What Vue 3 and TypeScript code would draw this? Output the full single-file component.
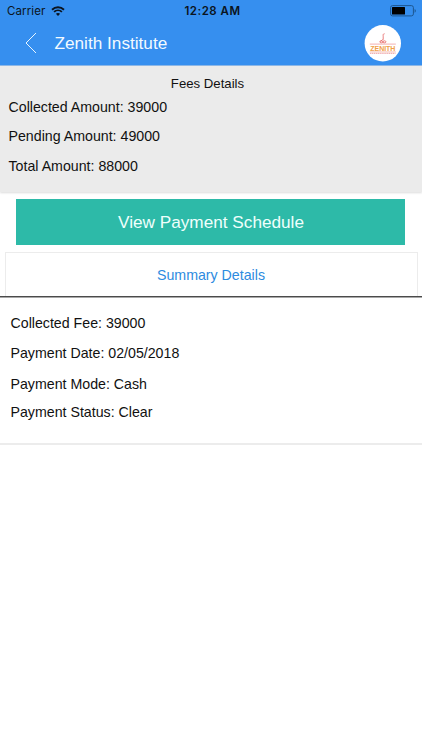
<template>
  <div class="screen">
    <header class="header">
      <div class="status-bar">
        <div class="carrier">
          <span>Carrier</span>
          <svg class="wifi" viewBox="0 0 14 10">
            <path d="M1 3.7C4.4.5 9.6.5 13 3.7" />
            <path d="M3.1 5.9c2.2-2 5.6-2 7.8 0" />
            <path class="wifi-dot" d="M7 9.9 4.9 7.7c1.1-1.1 3.1-1.1 4.2 0z" />
          </svg>
        </div>
        <span class="time">12:28 AM</span>
        <svg class="battery" viewBox="0 0 27 12">
          <rect class="battery-case" x=".6" y=".6" width="22.8" height="10.3" rx="2" />
          <rect x="2" y="2" width="13" height="7.5" rx=".5" />
          <path class="battery-tip" d="M24.6 4c1.6.5 1.6 3.2 0 3.7z" />
        </svg>
      </div>
      <div class="nav-bar">
        <button class="back" aria-label="Back">
          <svg viewBox="0 0 12 22">
            <path d="M11 1 1 11l10 10" />
          </svg>
        </button>
        <h1 class="title">Zenith Institute</h1>
        <svg class="logo" viewBox="0 0 37 37">
          <circle cx="18.8" cy="18.3" r="18.2" fill="#fff" />
          <g fill="none" stroke="#e4605f" stroke-width=".8">
            <path d="M20.6 8.8c-1.6-.2-1.5 1.1-1.4 2.4v3.4" />
            <path d="M19 14.2c-.5 1-1.4 1.4-2.6 2" />
            <ellipse cx="17.4" cy="16.8" rx="1.6" ry="1" />
            <ellipse cx="20.4" cy="16.8" rx="1.5" ry="1" />
            <path d="M5.8 19.1h26" stroke-width=".5" />
          </g>
          <text class="logo-name" x="18.8" y="25.7" textLength="25" lengthAdjust="spacing">ZENITH</text>
          <path d="M5.8 26.9h26" stroke="#ed8a77" stroke-width=".5" />
          <path d="M6 28.3h25.5" stroke="#ec9497" stroke-width=".9" stroke-dasharray="1.4 .5" />
        </svg>
      </div>
    </header>

    <section class="fees">
      <h2 class="fees-title">Fees Details</h2>
      <p v-for="fee in fees" :key="fee.label" class="fees-row">{{ fee.label }}: {{ fee.value }}</p>
    </section>

    <button class="schedule-btn">View Payment Schedule</button>

    <div class="tab">Summary Details</div>

    <section class="summary">
      <p v-for="item in summary" :key="item.label" class="summary-row">
        {{ item.label }}: {{ item.value }}
      </p>
    </section>
  </div>
</template>

<script setup lang="ts">
import { ref } from 'vue'

interface DetailRow {
  label: string
  value: string | number
}

const fees = ref<DetailRow[]>([
  { label: 'Collected Amount', value: 39000 },
  { label: 'Pending Amount', value: 49000 },
  { label: 'Total Amount', value: 88000 },
])

const summary = ref<DetailRow[]>([
  { label: 'Collected Fee', value: 39000 },
  { label: 'Payment Date', value: '02/05/2018' },
  { label: 'Payment Mode', value: 'Cash' },
  { label: 'Payment Status', value: 'Clear' },
])
</script>

<style>
body {
  margin: 0;
  background: #fff;
}
</style>

<style scoped>
.screen {
  min-height: 750px;
  background: #fff;
  color: #111;
  font-family: 'Liberation Sans', Arial, sans-serif;
  font-size: 14.2px;
}
h1,
h2,
p {
  margin: 0;
  font-weight: 400;
}
button {
  padding: 0;
  border: none;
  font-family: inherit;
}

.header {
  height: 65px;
  background: #368fef;
  border-bottom: 1px solid #8fb9e8;
}
.status-bar {
  display: grid;
  grid-template-columns: 1fr auto 1fr;
  align-items: center;
  height: 22px;
  padding: 0 5px 0 7px;
  color: #0b1420;
  font-family: Inter, sans-serif;
  font-size: 11.5px;
}
.carrier {
  display: flex;
  align-items: center;
  gap: 6px;
  letter-spacing: 0.1px;
}
.wifi {
  width: 14px;
  height: 10px;
  fill: none;
  stroke: #0b1420;
  stroke-width: 1.9;

  .wifi-dot {
    fill: #0b1420;
    stroke: none;
  }
}
.time {
  padding-left: 1px;
  font-weight: 600;
  letter-spacing: 0.5px;
}
.battery {
  justify-self: end;
  width: 27px;
  height: 12px;

  .battery-case {
    fill: none;
    stroke: #1d568f;
    stroke-width: 1;
  }

  .battery-tip {
    fill: #1d568f;
  }
}

.nav-bar {
  display: flex;
  align-items: center;
  height: 42px;
  padding: 0 21px 0 25px;
}
.back {
  display: flex;
  width: 29.5px;
  background: none;

  svg {
    width: 12px;
    height: 22px;
    fill: none;
    stroke: #e8f6ff;
    stroke-width: 1;
  }
}
.title {
  flex: 1;
  color: #f2faff;
  font-size: 17.2px;
  line-height: 42px;
}
.logo {
  width: 37px;
  height: 37px;
}
.logo-name {
  fill: #f0a04a;
  font-family: 'Liberation Sans', Arial, sans-serif;
  font-size: 7px;
  font-weight: 700;
  text-anchor: middle;
}

.fees {
  box-sizing: border-box;
  height: 126px;
  padding-top: 8px;
  background: #ebebeb;
  box-shadow: 0 1px 2px rgba(0, 0, 0, 0.14);
}
.fees-title {
  padding-right: 7px;
  font-size: 13.2px;
  line-height: 19px;
  text-align: center;
}
.fees-row {
  padding-left: 8.5px;
  line-height: 29.4px;
}

.schedule-btn {
  display: block;
  width: 389px;
  height: 46px;
  margin: 7px 0 0 16px;
  padding-left: 1px;
  background: #2dbaa8;
  color: #effffc;
  font-size: 17.2px;
}

.tab {
  box-sizing: border-box;
  height: 44px;
  margin: 7px 4.5px 0;
  border: 1px solid #ececec;
  border-bottom: none;
  color: #2d8be0;
  line-height: 44px;
  text-align: center;
}

.summary {
  box-sizing: border-box;
  height: 149px;
  padding: 11px 10.5px 0;
  border-top: 1px solid #4b4b4b;
  border-bottom: 2px solid #ececec;
  box-shadow: inset 0 1px #a8a8a8;
}
.summary-row {
  line-height: 30.4px;

  &:last-child {
    line-height: 26px;
  }
}
</style>
